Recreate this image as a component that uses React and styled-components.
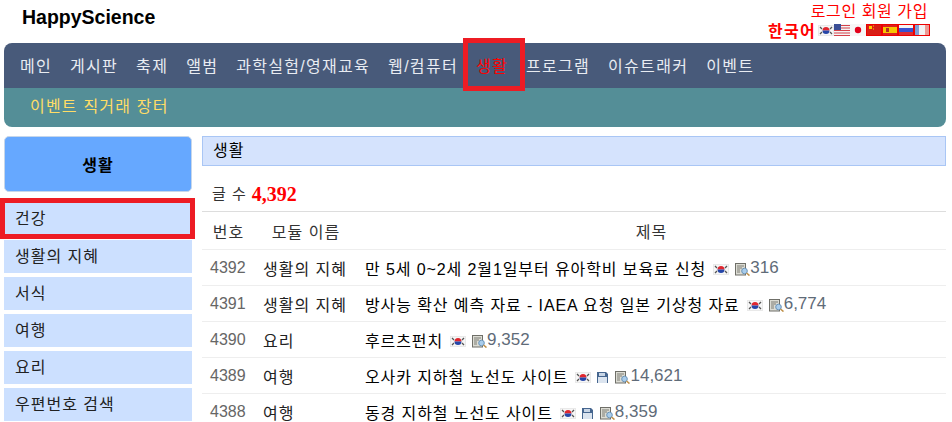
import React from "react";
import styled, { createGlobalStyle } from "styled-components";

const GlobalStyle = createGlobalStyle`
  html, body {
    margin: 0;
    padding: 0;
    background: #fff;
    overflow: hidden;
  }
  body {
    font-family: "Liberation Sans", "Noto Sans CJK KR", sans-serif;
    font-size: 16px;
    color: #000;
  }
`;

const Page = styled.div`
  width: 952px;
  height: 422px;
  overflow: hidden;
`;

const Top = styled.header`
  height: 43px;
  display: flex;
  justify-content: space-between;
  padding: 0 22px;
`;

const Logo = styled.h1`
  margin: 6px 0 0;
  font-size: 19.5px;
  line-height: 22px;
  font-weight: bold;
`;

const TopRight = styled.div`
  display: flex;
  flex-direction: column;
  align-items: flex-end;
  color: #f00;
`;

const Account = styled.div`
  margin: 3px 2px 0 0;
  font-size: 16px;
  line-height: 18px;
  letter-spacing: 0.6px;
  display: flex;
  gap: 5px;
`;

const LangRow = styled.div`
  display: flex;
  align-items: center;
  height: 18px;
`;

const LangName = styled.strong`
  font-size: 16px;
  letter-spacing: 1.3px;
  margin-right: 2px;
`;

const FlagBox = styled.svg`
  display: block;
  flex: none;
`;

const Nav = styled.nav`
  margin: 0 6px 0 4px;
  height: 84px;
  display: flex;
  flex-direction: column;
`;

const MainMenu = styled.ul`
  list-style: none;
  margin: 0;
  padding: 0 0 0 16px;
  height: 45px;
  background: #485a7a;
  border-radius: 8px 8px 0 0;
  display: flex;
  gap: 18px;
`;

const MenuItem = styled.li`
  position: relative;
  height: 45px;
  color: ${p => (p.$marked ? "#f00" : "#e8ecf2")};
  font-size: 16px;
  letter-spacing: 1.3px;
  line-height: 47px;
  white-space: nowrap;
  ${p =>
    p.$marked &&
    `
    &::after {
      content: "";
      position: absolute;
      left: -13px;
      right: -17px;
      top: -5px;
      bottom: -3px;
      border: 5px solid #ed1c24;
    }
  `}
`;

const SubMenu = styled.div`
  flex: 1;
  background: #548e97;
  border-radius: 0 0 8px 8px;
  padding-left: 26px;
  color: #ffdd66;
  font-size: 16px;
  letter-spacing: 1.2px;
  line-height: 37px;
`;

const Body = styled.div`
  display: grid;
  grid-template-columns: 188px 744px;
  column-gap: 10px;
  padding: 9px 0 0 4px;
`;

const Side = styled.aside`
  display: flex;
  flex-direction: column;
  gap: 4px;
`;

const SideTitle = styled.div`
  height: 56px;
  margin-bottom: 7px;
  background: #66a8ff;
  border: 1px solid #c6d6ea;
  border-radius: 5px;
  box-sizing: border-box;
  display: flex;
  align-items: center;
  justify-content: center;
  font-weight: bold;
  font-size: 16px;
  letter-spacing: 1px;
`;

const SideItem = styled.div`
  position: relative;
  height: 33px;
  background: #cce0ff;
  padding-left: 11px;
  color: #222;
  font-size: 16px;
  letter-spacing: 1px;
  line-height: 34px;
  ${p =>
    p.$marked &&
    `
    line-height: 32px;
    &::after {
      content: "";
      position: absolute;
      left: -4px;
      right: -3px;
      top: -5px;
      bottom: -3px;
      border: 5px solid #ed1c24;
    }
  `}
`;

const Main = styled.main``;

const TitleBar = styled.div`
  height: 30px;
  box-sizing: border-box;
  background: #d5e3fd;
  border: 1px solid #a9c6f5;
  padding-left: 10px;
  font-size: 16px;
  letter-spacing: 1px;
  line-height: 27px;
`;

const Count = styled.div`
  height: 46px;
  box-sizing: border-box;
  padding: 15px 0 0 10px;
  color: #333;
  font-size: 15px;
  display: flex;
  gap: 6px;
  border-bottom: 1px solid #ddd;
  align-items: flex-start;
  line-height: 26px;
  span {
    word-spacing: 2px;
  }
  strong {
    color: #f00;
    font-family: "Liberation Serif", serif;
    font-size: 20px;
  }
`;

const Row = styled.div`
  display: grid;
  grid-template-columns: 53px 102px 1fr;
  height: ${p => (p.$head ? "38px" : "36px")};
  box-sizing: border-box;
  border-bottom: 1px solid #eee;
  align-items: center;
  font-size: 16px;
  letter-spacing: 1px;
  color: ${p => (p.$head ? "#333" : "#000")};
`;

const HeadCell = styled.div`
  text-align: center;
`;

const NumCell = styled.div`
  padding-left: 8px;
  color: #666;
  letter-spacing: 0;
`;

const ModuleCell = styled.div`
  padding-left: 8px;
  color: #222;
  white-space: nowrap;
`;

const TitleCell = styled.div`
  padding-left: 8px;
  display: flex;
  align-items: center;
  white-space: nowrap;
  letter-spacing: 0.9px;
`;

const Subject = styled.span`
  margin-right: 7px;
`;

const Views = styled.span`
  color: #5f6b78;
  font-size: 17px;
  letter-spacing: 0;
`;

const IconSlot = styled.span`
  display: inline-flex;
  margin-top: 4px;
  margin-right: ${p => p.$gap || 0}px;
`;

const Korea = () => (
  <FlagBox width="16" height="11" viewBox="0 0 16 11">
    <rect width="16" height="11" fill="#e9e9e9" />
    <rect x="1" y="1" width="14" height="9" fill="#f6f6f6" />
    <path d="M4.5 5.5a3.5 3.5 0 0 1 7 0z" fill="#e0262e" />
    <path d="M4.5 5.5a3.5 3.5 0 0 0 7 0z" fill="#2546a8" />
    <path d="M2 2l2 2M12 4l2-2M2 9l2-2M12 7l2 2" stroke="#555" strokeWidth="1.3" />
  </FlagBox>
);

const Usa = () => (
  <FlagBox width="16" height="12" viewBox="0 0 16 12">
    <rect width="16" height="12" fill="#f4f4f4" />
    <path d="M0 1.5h16M0 4h16M0 6.5h16M0 9h16M0 11.5h16" stroke="#d5404a" />
    <rect width="7" height="6" fill="#3b4f96" />
  </FlagBox>
);

const Japan = () => (
  <FlagBox width="16" height="12" viewBox="0 0 16 12">
    <rect width="16" height="12" fill="#f6f6f6" />
    <circle cx="8" cy="6" r="3.2" fill="#e3001b" />
  </FlagBox>
);

const China = () => (
  <FlagBox width="16" height="12" viewBox="0 0 16 12">
    <rect width="16" height="12" fill="#d81e16" />
    <rect x="3" y="2" width="3" height="3" fill="#fc0" />
    <rect x="7" y="1.5" width="1" height="1" fill="#fc0" />
    <rect x="7" y="4.5" width="1" height="1" fill="#fc0" />
    <rect x=".5" y=".5" width="15" height="11" fill="none" stroke="#e00" />
  </FlagBox>
);

const Spain = () => (
  <FlagBox width="16" height="12" viewBox="0 0 16 12">
    <rect width="16" height="12" fill="#d9201f" />
    <rect y="3" width="16" height="6" fill="#f8c500" />
    <rect x="4" y="4" width="3" height="4" fill="#b03020" />
    <rect x=".5" y=".5" width="15" height="11" fill="none" stroke="#e00" />
  </FlagBox>
);

const Russia = () => (
  <FlagBox width="16" height="12" viewBox="0 0 16 12">
    <rect width="16" height="12" fill="#f4f4f4" />
    <rect y="4" width="16" height="4" fill="#3a50d0" />
    <rect y="8" width="16" height="4" fill="#e02c30" />
    <rect x=".5" y=".5" width="15" height="11" fill="none" stroke="#e00" />
  </FlagBox>
);

const France = () => (
  <FlagBox width="16" height="12" viewBox="0 0 16 12">
    <rect width="16" height="12" fill="#f2f2f2" />
    <rect width="5" height="12" fill="#7f9fd8" />
    <rect x="11" width="5" height="12" fill="#ec9a94" />
    <rect x=".5" y=".5" width="15" height="11" fill="none" stroke="#e00" />
  </FlagBox>
);

const Disk = () => (
  <FlagBox width="11" height="11" viewBox="0 0 11 11">
    <path d="M0 0h9l2 2v9H0z" fill="#46668f" />
    <rect x="2" y="1" width="6" height="3" fill="#c9d6e6" />
    <rect x="1" y="5" width="9" height="6" fill="#dbe4ef" />
  </FlagBox>
);

const Viewed = () => (
  <FlagBox width="15" height="13" viewBox="0 0 15 13">
    <rect x=".5" y=".5" width="10" height="11.5" fill="#dcdcd4" stroke="#6f6f68" />
    <path d="M2 3h7M2 5h5M2 7h3M2 9h3" stroke="#7c7c75" />
    <circle cx="9.5" cy="8" r="2.8" fill="#a9cdec" stroke="#6c94b8" />
    <path d="M11.5 10l3 2.5" stroke="#c09048" strokeWidth="1.6" />
  </FlagBox>
);

const menu = ["메인", "게시판", "축제", "앨범", "과학실험/영재교육", "웹/컴퓨터", "생활", "프로그램", "이슈트래커", "이벤트"];
const sideItems = ["건강", "생활의 지혜", "서식", "여행", "요리", "우편번호 검색"];
const rows = [
  { no: 4392, module: "생활의 지혜", title: "만 5세 0~2세 2월1일부터 유아학비 보육료 신청", views: "316" },
  { no: 4391, module: "생활의 지혜", title: "방사능 확산 예측 자료 - IAEA 요청 일본 기상청 자료", views: "6,774" },
  { no: 4390, module: "요리", title: "후르츠펀치", views: "9,352" },
  { no: 4389, module: "여행", title: "오사카 지하철 노선도 사이트", views: "14,621", file: true },
  { no: 4388, module: "여행", title: "동경 지하철 노선도 사이트", views: "8,359", file: true },
];

const App = () => (
  <Page>
    <GlobalStyle />
    <Top>
      <Logo>HappyScience</Logo>
      <TopRight>
        <Account>
          <span>로그인</span>
          <span>회원</span>
          <span>가입</span>
        </Account>
        <LangRow>
          <LangName>한국어</LangName>
          <Korea />
          <Usa />
          <Japan />
          <China />
          <Spain />
          <Russia />
          <France />
        </LangRow>
      </TopRight>
    </Top>
    <Nav>
      <MainMenu>
        {menu.map(m => (
          <MenuItem key={m} $marked={m === "생활"}>
            {m}
          </MenuItem>
        ))}
      </MainMenu>
      <SubMenu>이벤트 직거래 장터</SubMenu>
    </Nav>
    <Body>
      <Side>
        <SideTitle>생활</SideTitle>
        {sideItems.map((s, i) => (
          <SideItem key={s} $marked={i === 0}>
            {s}
          </SideItem>
        ))}
      </Side>
      <Main>
        <TitleBar>생활</TitleBar>
        <Count>
          <span>글 수</span>
          <strong>4,392</strong>
        </Count>
        <Row $head>
          <HeadCell>번호</HeadCell>
          <HeadCell>모듈 이름</HeadCell>
          <HeadCell>제목</HeadCell>
        </Row>
        {rows.map(r => (
          <Row key={r.no}>
            <NumCell>{r.no}</NumCell>
            <ModuleCell>{r.module}</ModuleCell>
            <TitleCell>
              <Subject>{r.title}</Subject>
              <IconSlot $gap={6}>
                <Korea />
              </IconSlot>
              {r.file && (
                <IconSlot $gap={7}>
                  <Disk />
                </IconSlot>
              )}
              <IconSlot>
                <Viewed />
              </IconSlot>
              <Views>{r.views}</Views>
            </TitleCell>
          </Row>
        ))}
      </Main>
    </Body>
  </Page>
);

export default App;
